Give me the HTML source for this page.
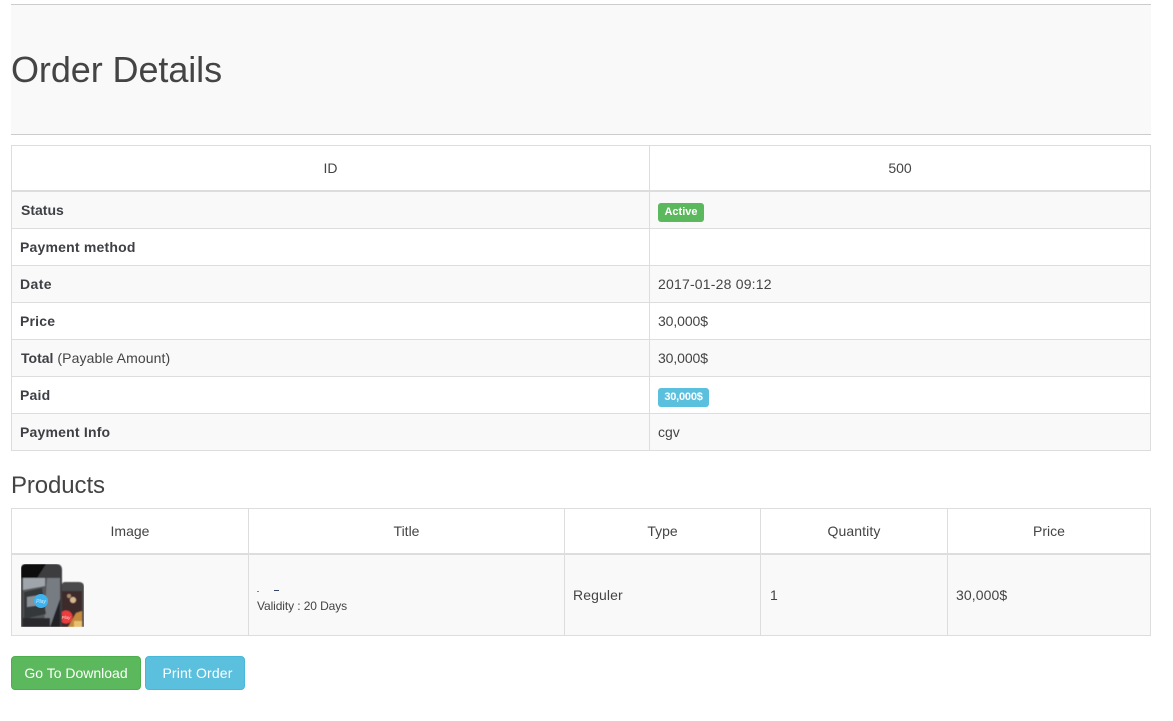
<!DOCTYPE html>
<html><head><meta charset="utf-8"><title>Order Details</title>
<style>
*{box-sizing:border-box}
html,body{margin:0;padding:0;background:#fff;width:1173px;height:721px;overflow:hidden}
body{position:relative;font-family:"Liberation Sans",sans-serif;font-size:14px;color:#444;line-height:20px}
.a{position:absolute;white-space:nowrap}
.l{position:absolute;background:#ddd}
.bg{position:absolute;background:#f9f9f9}
.c{text-align:center}
b{font-weight:bold}
.lab{font-weight:bold;color:#3f4045;letter-spacing:.2px}
</style></head><body>
<div class="bg" style="left:11px;top:4px;width:1140px;height:131px"></div>
<div class="l" style="left:11px;top:4px;width:1140px;height:1px;background:#ccc"></div>
<div class="l" style="left:11px;top:134px;width:1140px;height:1px;background:#ccc"></div>
<div class="a" style="left:11px;top:50px;font-size:36px;line-height:40px;color:#444;letter-spacing:-.08px">Order Details</div>

<div class="bg" style="left:11px;top:191px;width:1140px;height:38px"></div>
<div class="bg" style="left:11px;top:265px;width:1140px;height:38px"></div>
<div class="bg" style="left:11px;top:339px;width:1140px;height:38px"></div>
<div class="bg" style="left:11px;top:413px;width:1140px;height:38px"></div>
<div class="l" style="left:11px;top:145px;width:1140px;height:1px"></div>
<div class="l" style="left:11px;top:190px;width:1140px;height:2px"></div>
<div class="l" style="left:11px;top:228px;width:1140px;height:1px"></div>
<div class="l" style="left:11px;top:265px;width:1140px;height:1px"></div>
<div class="l" style="left:11px;top:302px;width:1140px;height:1px"></div>
<div class="l" style="left:11px;top:339px;width:1140px;height:1px"></div>
<div class="l" style="left:11px;top:376px;width:1140px;height:1px"></div>
<div class="l" style="left:11px;top:413px;width:1140px;height:1px"></div>
<div class="l" style="left:11px;top:450px;width:1140px;height:1px"></div>
<div class="l" style="left:11px;top:145px;width:1px;height:306px"></div>
<div class="l" style="left:649px;top:145px;width:1px;height:306px"></div>
<div class="l" style="left:1150px;top:145px;width:1px;height:306px"></div>

<div class="a c" style="left:12px;top:158px;width:637px">ID</div>
<div class="a c" style="left:650px;top:158px;width:500px">500</div>
<div class="a lab" style="left:21px;top:200px;letter-spacing:0">Status</div>
<div class="a" style="left:658px;top:203px;width:46px;height:19px;background:#5cb85c;border-radius:3px;color:#fff;font-size:11px;font-weight:bold;line-height:18px;text-align:center">Active</div>
<div class="a lab" style="left:20px;top:237px">Payment method</div>
<div class="a lab" style="left:20px;top:274px;letter-spacing:.4px">Date</div>
<div class="a" style="left:658px;top:274px;letter-spacing:.2px">2017-01-28 09:12</div>
<div class="a lab" style="left:20px;top:311px">Price</div>
<div class="a" style="left:658px;top:311px;letter-spacing:-.1px">30,000$</div>
<div class="a" style="left:21px;top:348px;letter-spacing:.1px"><b class="lab" style="letter-spacing:0">Total</b> (Payable Amount)</div>
<div class="a" style="left:658px;top:348px;letter-spacing:-.1px">30,000$</div>
<div class="a lab" style="left:20px;top:385px">Paid</div>
<div class="a" style="left:658px;top:388px;width:51px;height:19px;background:#5bc0de;border-radius:3px;color:#fff;font-size:11px;font-weight:bold;line-height:18px;text-align:center;letter-spacing:-.2px">30,000$</div>
<div class="a lab" style="left:20px;top:422px">Payment Info</div>
<div class="a" style="left:658px;top:422px">cgv</div>

<div class="a" style="left:11px;top:471px;font-size:24px;line-height:30px;color:#444;letter-spacing:-.1px">Products</div>

<div class="bg" style="left:11px;top:555px;width:1140px;height:81px"></div>
<div class="l" style="left:11px;top:508px;width:1140px;height:1px"></div>
<div class="l" style="left:11px;top:553px;width:1140px;height:2px"></div>
<div class="l" style="left:11px;top:635px;width:1140px;height:1px"></div>
<div class="l" style="left:11px;top:508px;width:1px;height:128px"></div>
<div class="l" style="left:248px;top:508px;width:1px;height:128px"></div>
<div class="l" style="left:564px;top:508px;width:1px;height:128px"></div>
<div class="l" style="left:760px;top:508px;width:1px;height:128px"></div>
<div class="l" style="left:947px;top:508px;width:1px;height:128px"></div>
<div class="l" style="left:1150px;top:508px;width:1px;height:128px"></div>

<div class="a c" style="left:12px;top:521px;width:236px">Image</div>
<div class="a c" style="left:249px;top:521px;width:315px">Title</div>
<div class="a c" style="left:565px;top:521px;width:195px">Type</div>
<div class="a c" style="left:761px;top:521px;width:186px;letter-spacing:.1px">Quantity</div>
<div class="a c" style="left:948px;top:521px;width:202px">Price</div>

<svg class="a" style="left:20px;top:563px" width="64" height="64" viewBox="0 0 64 64">
<defs><filter id="f" x="0" y="0" width="100%" height="100%"><feGaussianBlur stdDeviation=".6"/></filter></defs>
<g filter="url(#f)">
<path d="M42 64V22q0-3 3-3h14q5 0 5 5v40z" fill="#4a4a4c"/>
<rect x="42" y="28" width="20" height="36" fill="#3c2a2a"/>
<circle cx="53" cy="37" r="3" fill="#d8b890"/>
<circle cx="49" cy="33" r="2" fill="#a98a70"/>
<path d="M48 64l8-14 6-2v16z" fill="#c48a3e"/>
<rect x="54" y="58" width="8" height="6" fill="#e8c070"/>
<circle cx="46" cy="54" r="6.5" fill="#ee3d3d"/>
<path d="M1 64V6q0-5 5-5h30q6 0 6 6v57z" fill="#3d3d3f"/>
<path d="M1 7q0-6 5-6h20l-9 14H1z" fill="#070708"/>
<rect x="3" y="15" width="37" height="49" fill="#7b7f84"/>
<path d="M3 15h24l-3 49H3z" fill="#54565a"/>
<path d="M3 15h22v8L3 27z" fill="#9fa5ab"/>
<path d="M4 29l18-4 4 26-22 5z" fill="#35373b"/>
<path d="M7 34l13-2 1 10-14 2z" fill="#8b9097"/>
<path d="M27 15h13v26l-9 23h-5z" fill="#777c82"/>
<path d="M30 64l10-28v28z" fill="#222326"/>
<rect x="3" y="55" width="27" height="9" fill="#2a2b2f"/>
</g>
<circle cx="21" cy="38" r="7" fill="#3fb3ef"/>
<text x="21" y="40" font-size="5" font-style="italic" fill="#d5eefb" text-anchor="middle" font-family="Liberation Sans">Play</text>
<text x="46" y="56" font-size="4.5" font-style="italic" fill="#fbd5d5" text-anchor="middle" font-family="Liberation Sans">Play</text>
</svg>
<div class="a" style="left:257px;top:591px;width:2px;height:1px;background:#789"></div>
<div class="a" style="left:274px;top:590px;width:5px;height:1px;background:#346"></div>
<div class="a" style="left:257px;top:596px;font-size:12px;letter-spacing:-.1px">Validity : 20 Days</div>
<div class="a" style="left:573px;top:585px;letter-spacing:.1px">Reguler</div>
<div class="a" style="left:770px;top:585px">1</div>
<div class="a" style="left:956px;top:585px;letter-spacing:.1px">30,000$</div>

<div class="a c" style="left:11px;top:656px;width:130px;height:34px;background:#5cb85c;border:1px solid #4cae4c;border-radius:4px;color:#fff;line-height:32px">Go To Download</div>
<div class="a c" style="left:145px;top:656px;width:100px;height:34px;background:#5bc0de;border:1px solid #46b8da;border-radius:4px;color:#fff;line-height:32px;padding-left:5px;letter-spacing:.15px">Print Order</div>
</body></html>
